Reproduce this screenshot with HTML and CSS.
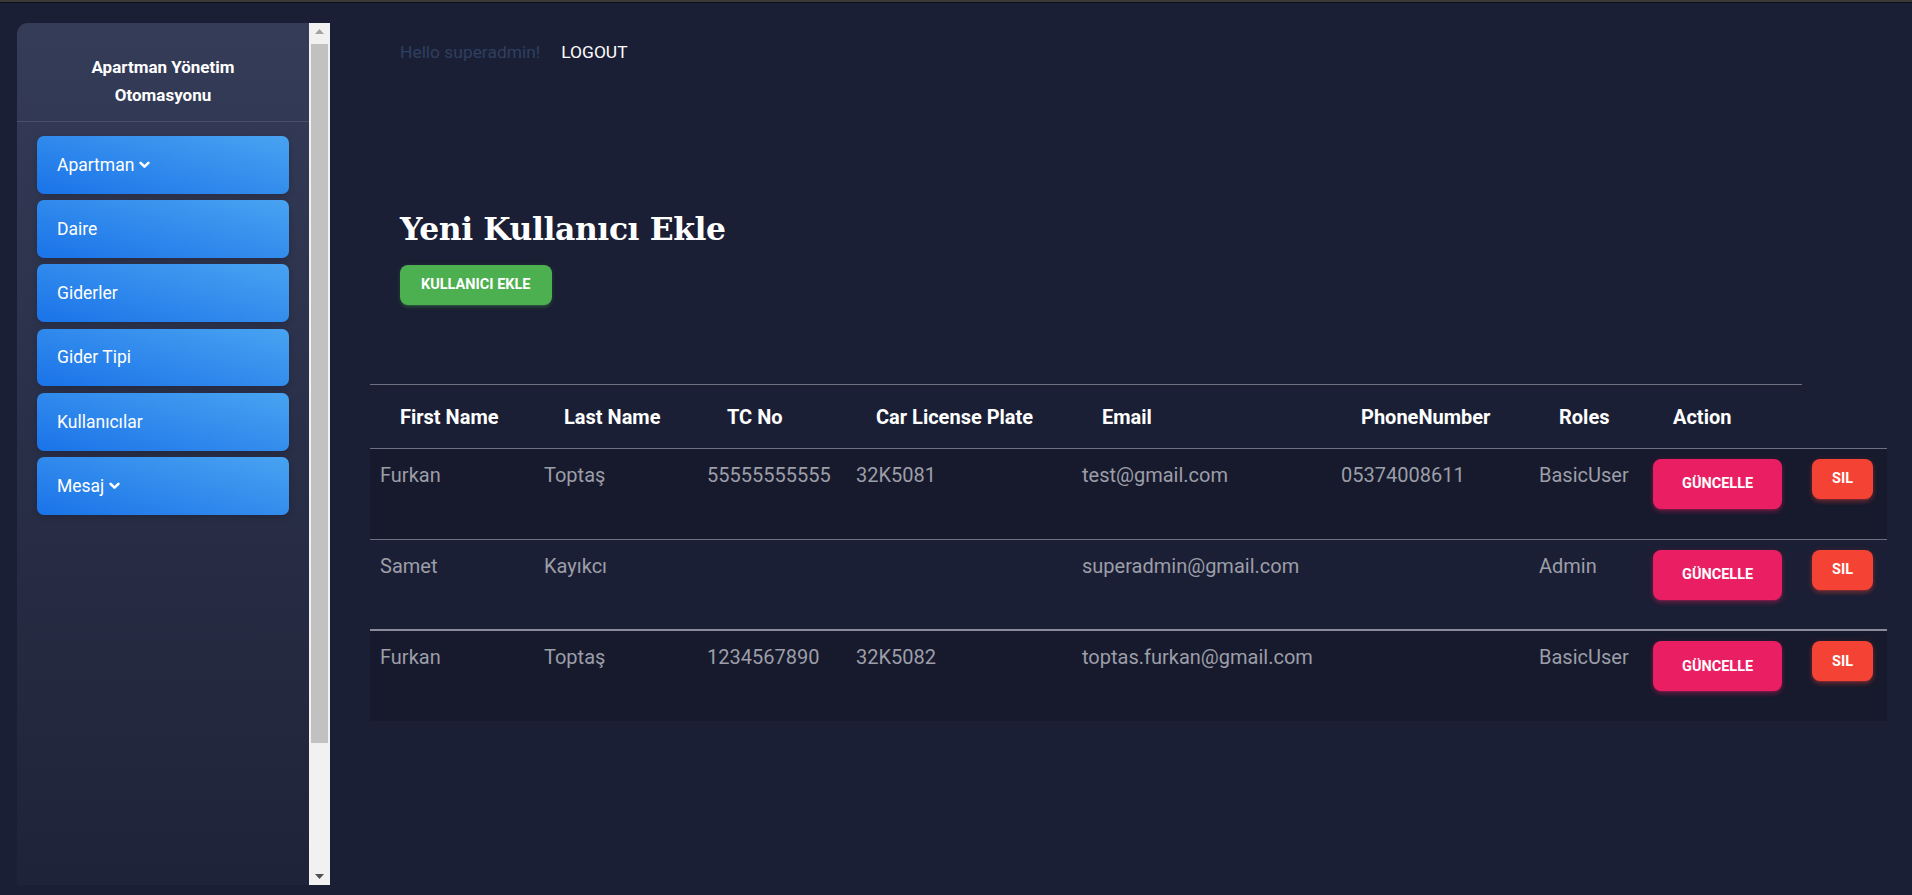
FILE: index.html
```html
<!DOCTYPE html>
<html lang="en">
<head>
<meta charset="utf-8">
<title>Kullanıcılar</title>
<link rel="stylesheet" href="styles.css">
</head>
<body>
<div class="top-edge"></div>
<div class="layout">
  <aside class="sidebar-wrap">
    <div class="sidebar">
      <div class="brand">Apartman Yönetim<br>Otomasyonu</div>
      <nav class="nav">
        <a class="nav-btn">Apartman <svg class="chev" width="11" height="8" viewBox="0 0 11 8"><polyline points="1.6,1.8 5.5,5.7 9.4,1.8" fill="none" stroke="#fff" stroke-width="2.6" stroke-linecap="round" stroke-linejoin="round"/></svg></a>
        <a class="nav-btn">Daire</a>
        <a class="nav-btn">Giderler</a>
        <a class="nav-btn">Gider Tipi</a>
        <a class="nav-btn">Kullanıcılar</a>
        <a class="nav-btn">Mesaj <svg class="chev" width="11" height="8" viewBox="0 0 11 8"><polyline points="1.6,1.8 5.5,5.7 9.4,1.8" fill="none" stroke="#fff" stroke-width="2.6" stroke-linecap="round" stroke-linejoin="round"/></svg></a>
      </nav>
    </div>
    <div class="scrollbar">
      <div class="sb-arrow"><svg width="9" height="5" viewBox="0 0 9 5"><polygon points="0,5 4.5,0 9,5" fill="#a3a3a3"/></svg></div>
      <div class="sb-track"><div class="sb-thumb"></div></div>
      <div class="sb-arrow"><svg width="9" height="5" viewBox="0 0 9 5"><polygon points="0,0 9,0 4.5,5" fill="#505050"/></svg></div>
    </div>
  </aside>
  <main class="main">
    <div class="topbar">
      <span class="hello">Hello superadmin!</span>
      <a class="logout">LOGOUT</a>
    </div>
    <div class="page-head">
      <h1 class="title">Yeni Kullanıcı Ekle</h1>
      <button class="btn btn-success">KULLANICI EKLE</button>
    </div>
    <table class="users">
      <colgroup>
        <col class="c1"><col class="c2"><col class="c3"><col class="c4"><col class="c5"><col class="c6"><col class="c7"><col class="c8"><col class="c9">
      </colgroup>
      <thead>
        <tr>
          <th>First Name</th><th>Last Name</th><th>TC No</th><th>Car License Plate</th><th>Email</th><th>PhoneNumber</th><th>Roles</th><th>Action</th>
        </tr>
      </thead>
      <tbody>
        <tr class="odd">
          <td>Furkan</td><td>Toptaş</td><td>55555555555</td><td>32K5081</td><td>test@gmail.com</td><td>05374008611</td><td>BasicUser</td>
          <td class="act"><button class="btn btn-update">GÜNCELLE</button></td>
          <td class="act"><button class="btn btn-del">SIL</button></td>
        </tr>
        <tr>
          <td>Samet</td><td>Kayıkcı</td><td></td><td></td><td>superadmin@gmail.com</td><td></td><td>Admin</td>
          <td class="act"><button class="btn btn-update">GÜNCELLE</button></td>
          <td class="act"><button class="btn btn-del">SIL</button></td>
        </tr>
        <tr class="odd sep">
          <td>Furkan</td><td>Toptaş</td><td>1234567890</td><td>32K5082</td><td>toptas.furkan@gmail.com</td><td></td><td>BasicUser</td>
          <td class="act"><button class="btn btn-update">GÜNCELLE</button></td>
          <td class="act"><button class="btn btn-del">SIL</button></td>
        </tr>
      </tbody>
    </table>
  </main>
</div>
</body>
</html>
```

FILE: styles.css
```css
* { box-sizing: border-box; }
html, body { margin: 0; height: 100%; }
body {
  background: #1b1f35;
  font-family: Roboto, "Liberation Sans", Arial, sans-serif;
  color: #fff;
  overflow: hidden;
}
.top-edge {
  height: 3px;
  border-top: 2px solid #3a3a3a;
  background: #0f1015;
}
.layout {
  display: flex;
  align-items: flex-start;
}
.sidebar-wrap {
  display: flex;
  margin: 20px 0 0 17px;
  height: 862px;
  flex: none;
}
.sidebar {
  width: 292px;
  height: 100%;
  border-top-left-radius: 11px;
  background: linear-gradient(180deg, #353c58 0%, #2a3049 45%, #1f2339 100%);
}
.brand {
  padding: 30px 0 12px;
  text-align: center;
  font-weight: 700;
  font-size: 17px;
  line-height: 28px;
  border-bottom: 1px solid #4a5069;
}
.nav {
  display: flex;
  flex-direction: column;
  gap: 6.4px;
  padding: 14px 20px 0;
}
.nav-btn {
  display: flex;
  align-items: center;
  height: 57.8px;
  padding-left: 20px;
  border-radius: 7px;
  background: linear-gradient(195deg, #49a3f1, #1a73e8);
  box-shadow: 0 2px 6px rgba(0, 0, 0, 0.18);
  font-size: 17.5px;
  color: #fff;
}
.chev { margin-left: 5px; margin-top: 1px; }
.scrollbar {
  width: 21px;
  height: 100%;
  background: #f1f1f1;
  display: flex;
  flex-direction: column;
}
.sb-arrow {
  height: 17px;
  display: flex;
  align-items: center;
  justify-content: center;
}
.sb-track { flex: 1; padding: 4px 2px 0; }
.sb-thumb { height: 699px; background: #c1c1c1; }

.main { flex: 1; padding-left: 40px; }
.topbar {
  padding: 38px 0 0 30px;
  font-size: 17.4px;
  line-height: 22px;
  display: flex;
  gap: 21px;
}
.hello { color: #2e3f5f; }
.logout { color: #fff; }
.page-head { padding: 146px 0 0 30px; }
.title {
  margin: 0;
  font-family: "DejaVu Serif", "Liberation Serif", serif;
  font-weight: 700;
  font-size: 31.4px;
  line-height: 40px;
  letter-spacing: -0.4px;
}
.btn {
  border: 0;
  font-family: Roboto, "Liberation Sans", Arial, sans-serif;
  font-weight: 700;
  color: #fff;
  font-size: 14.5px;
  border-radius: 8px;
  cursor: pointer;
}
.btn-success {
  margin-top: 15.5px;
  height: 40px;
  padding: 0 21px;
  background: #4caf50;
  box-shadow: 0 3px 3px 0 rgba(76,175,80,.15), 0 3px 1px -2px rgba(76,175,80,.2), 0 1px 5px 0 rgba(76,175,80,.15);
}
.users {
  margin-top: 79px;
  width: 1517px;
  border-collapse: collapse;
  table-layout: fixed;
}
.c1 { width: 164px; } .c2 { width: 163px; } .c3 { width: 149px; } .c4 { width: 226px; }
.c5 { width: 259px; } .c6 { width: 198px; } .c7 { width: 114px; } .c8 { width: 159px; } .c9 { width: 85px; }
.users th {
  border-top: 1px solid #6d7080;
  text-align: left;
  font-size: 20px;
  font-weight: 700;
  line-height: 30px;
  padding: 17px 10px 16px 30px;
  white-space: nowrap;
}
.users td {
  border-top: 1px solid #6d7080;
  vertical-align: top;
  padding: 11px 10px 0 10px;
  height: 91px;
  font-size: 20px;
  line-height: 30px;
  color: #9c9ea8;
  white-space: nowrap;
}
.users tr.odd td { background: #171a2d; }
.users tr.sep td { border-top: 2px solid #8a8c9b; }
.users td.act { padding-top: 10px; }
.btn-update {
  height: 50px;
  padding: 0 29px;
  background: #e91e63;
  box-shadow: 0 3px 4px 0 rgba(233,30,99,.25), 0 3px 1px -2px rgba(233,30,99,.2), 0 1px 6px 0 rgba(233,30,99,.2);
}
.btn-del {
  height: 40px;
  padding: 0 20px;
  background: #f44335;
  box-shadow: 0 3px 4px 0 rgba(244,67,53,.25), 0 3px 1px -2px rgba(244,67,53,.2), 0 1px 6px 0 rgba(244,67,53,.2);
}
```
